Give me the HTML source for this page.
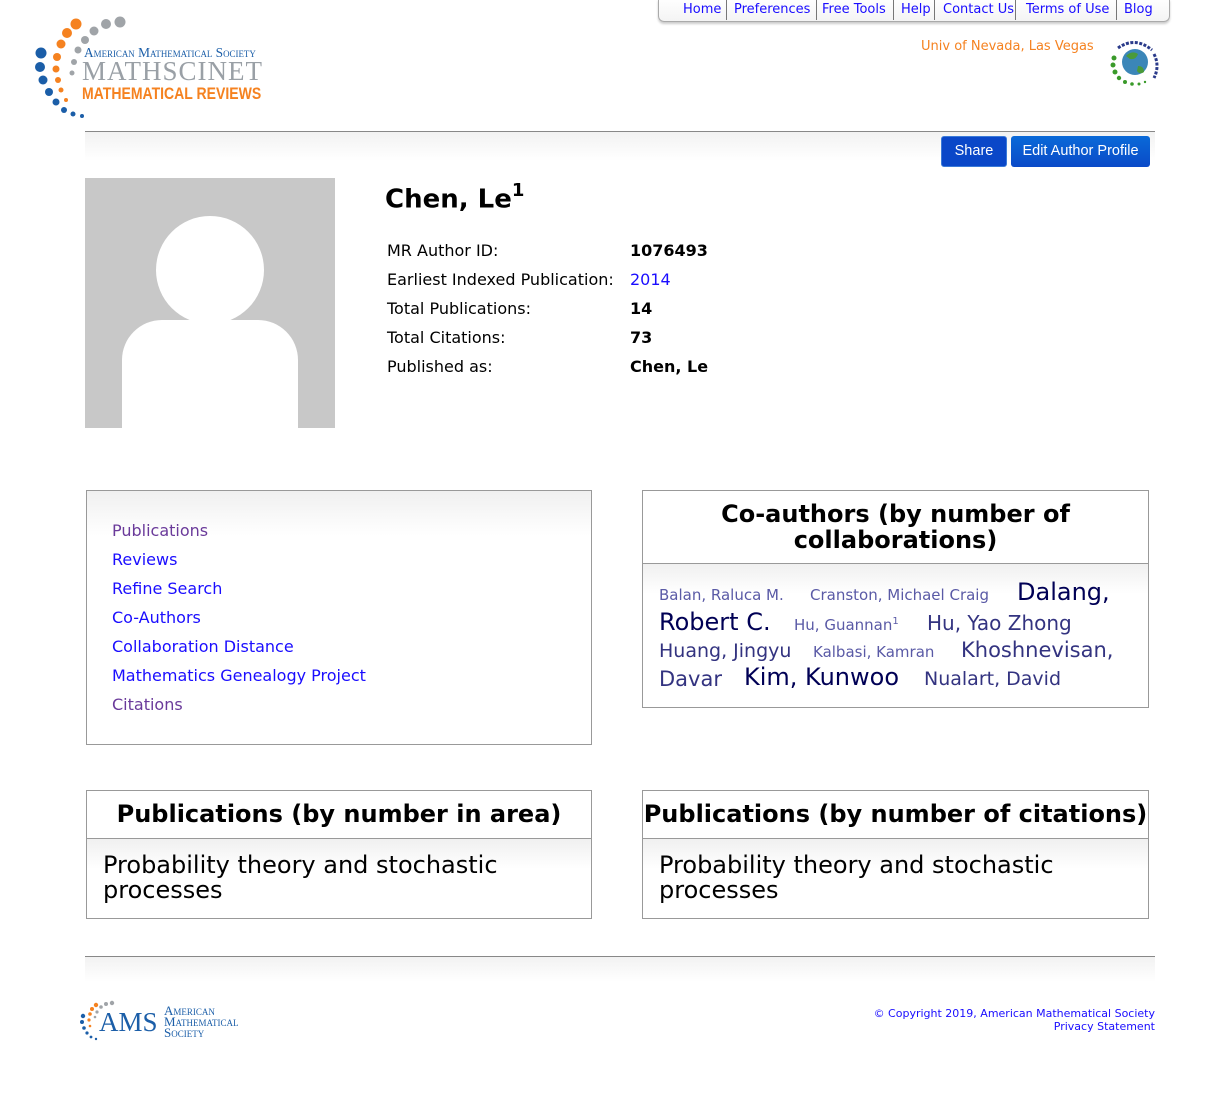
<!DOCTYPE html>
<html><head><meta charset="utf-8"><style>
*{margin:0;padding:0;box-sizing:border-box}
body{width:1224px;height:1094px;background:#fff;font-family:"DejaVu Sans","Liberation Sans",sans-serif;position:relative;overflow:hidden;color:#000}
.a{position:absolute;white-space:nowrap}
a{text-decoration:none;color:#1a0dff}
.nav{position:absolute;left:658px;top:-1px;width:512px;height:23px;border:1px solid #aaa;border-top:none;border-radius:0 0 6px 6px;box-shadow:0 2px 2px #ccc;background:linear-gradient(#fff,#f4f4f4);font-size:13px;}
.nav span{position:absolute;top:3px;color:#1a0dff}
.nav i{position:absolute;top:1px;height:20px;border-left:1px solid #777}
.box{position:absolute;border:1px solid #999;background:linear-gradient(#f0f0f0,#fff 45px)}
.hd{position:absolute;left:0;right:0;text-align:center;font-weight:bold;font-size:24px;line-height:26px}
.sep{position:absolute;left:0;right:0;border-top:1px solid #999}
.inner{position:absolute;left:0;right:0;background:linear-gradient(#f0f0f0,#fff 30px)}
.row{position:absolute;font-size:16px}
.lk{position:absolute;font-size:16px;left:25px}
.s{color:#5a5aa6;font-size:15px}
.m{color:#333380;font-size:20px}
.l{color:#000055;font-size:24px}
</style></head><body>

<svg class="a" style="left:32px;top:14px" width="100" height="104" viewBox="0 0 100 104">
<g fill="#f58220"><circle cx="44" cy="10" r="5.5"/><circle cx="35" cy="19" r="5"/><circle cx="29" cy="30" r="4.5"/><circle cx="25" cy="43" r="4"/><circle cx="24" cy="55" r="3.5"/><circle cx="26" cy="66" r="3"/><circle cx="29" cy="76" r="2.5"/><circle cx="34" cy="86" r="2"/></g>
<g fill="#a0a4a8"><circle cx="88" cy="8" r="5.5"/><circle cx="74" cy="10" r="5"/><circle cx="62" cy="17" r="4.5"/><circle cx="53" cy="26" r="4"/><circle cx="46" cy="36" r="3.5"/><circle cx="42" cy="48" r="3"/><circle cx="40" cy="59" r="2.5"/></g>
<g fill="#1b5ea8"><circle cx="9" cy="39" r="5.5"/><circle cx="8" cy="53" r="5"/><circle cx="11" cy="66" r="4.5"/><circle cx="17" cy="78" r="4"/><circle cx="24" cy="88" r="3.5"/><circle cx="32" cy="96" r="3"/><circle cx="41" cy="100" r="2.5"/><circle cx="50" cy="102" r="2"/></g>
</svg>
<div class="a" style="left:84px;top:45px;font-family:'Liberation Serif',serif;font-size:13.5px;color:#1b5ea8;font-variant:small-caps;transform:scaleX(0.99);transform-origin:left">American Mathematical Society</div>
<div class="a" style="left:82px;top:56px;font-family:'Liberation Serif',serif;font-size:27px;color:#9aa0a6;letter-spacing:1px">MATHSCINET</div>
<div class="a" style="left:82px;top:85px;font-family:'Liberation Sans',sans-serif;font-weight:bold;font-size:16.5px;color:#f58220;transform:scaleX(0.85);transform-origin:left">MATHEMATICAL REVIEWS</div>

<div class="nav">
<span style="left:24px">Home</span><i style="left:67px"></i>
<span style="left:75px">Preferences</span><i style="left:157px"></i>
<span style="left:163px">Free Tools</span><i style="left:234px"></i>
<span style="left:242px">Help</span><i style="left:275px"></i>
<span style="left:284px">Contact Us</span><i style="left:356px"></i>
<span style="left:367px">Terms of Use</span><i style="left:457px"></i>
<span style="left:465px">Blog</span>
</div>

<div class="a" style="left:921px;top:39px;font-size:13px;color:#f58220">Univ of Nevada, Las Vegas</div>
<svg class="a" style="left:1108px;top:36px" width="54" height="54" viewBox="0 0 54 54">
<circle cx="27" cy="26" r="13" fill="#3b86b8"/><path d="M18 20q6-6 12-2q-2 6-8 5z M30 30q6 0 6 6q-4 3-7-1z" fill="#4a9a3a"/>
<g fill="#3a9a2a"><circle cx="6" cy="22" r="2.5"/><circle cx="5" cy="29" r="2.5"/><circle cx="7" cy="36" r="2.5"/><circle cx="11" cy="42" r="2.2"/><circle cx="17" cy="46" r="2"/><circle cx="24" cy="48" r="1.8"/><circle cx="31" cy="48" r="1.5"/><circle cx="37" cy="46" r="1.2"/></g>
<path d="M10 12 Q27 0 44 14" stroke="#2a3a8a" stroke-width="3" stroke-dasharray="3 1.5" fill="none"/>
<path d="M46 18 Q52 30 46 42" stroke="#2a3a8a" stroke-width="3" stroke-dasharray="3 1.5" fill="none"/>
</svg>

<div class="a" style="left:85px;top:131px;width:1070px;height:30px;border-top:1px solid #888;background:linear-gradient(#f2f2f2,#fff)"></div>
<div class="a" style="left:941px;top:136px;width:66px;height:31px;background:#0a47c8;border:1px solid #3a7ad8;border-radius:3px;color:#fff;font-family:'Liberation Sans',sans-serif;font-size:14.5px;text-align:center;line-height:29px">Share</div>
<div class="a" style="left:1011px;top:136px;width:139px;height:31px;background:linear-gradient(#0a6ad8,#0a4ac8);border-radius:3px;color:#fff;font-family:'Liberation Sans',sans-serif;font-size:14.5px;text-align:center;line-height:31px">Edit Author Profile</div>

<div class="a" style="left:85px;top:178px;width:250px;height:250px;background:#c8c8c8;overflow:hidden">
<div style="position:absolute;left:71px;top:38px;width:108px;height:108px;border-radius:50%;background:#fff"></div>
<div style="position:absolute;left:37px;top:142px;width:176px;height:140px;border-radius:40px 40px 0 0;background:#fff"></div>
</div>

<div class="a" style="left:385px;top:182px;font-size:26px;font-weight:bold">Chen, Le<sup style="font-size:18px;position:relative;top:-2px">1</sup></div>
<div class="row a" style="left:387px;top:241px">MR Author ID:</div><div class="row a" style="left:630px;top:241px;font-weight:bold">1076493</div>
<div class="row a" style="left:387px;top:270px">Earliest Indexed Publication:</div><div class="row a" style="left:630px;top:270px;color:#1a0dff">2014</div>
<div class="row a" style="left:387px;top:299px">Total Publications:</div><div class="row a" style="left:630px;top:299px;font-weight:bold">14</div>
<div class="row a" style="left:387px;top:328px">Total Citations:</div><div class="row a" style="left:630px;top:328px;font-weight:bold">73</div>
<div class="row a" style="left:387px;top:357px">Published as:</div><div class="row a" style="left:630px;top:357px;font-weight:bold">Chen, Le</div>

<div class="box" style="left:86px;top:490px;width:506px;height:255px">
<div class="lk a" style="top:30px;color:#6a3a9a">Publications</div>
<div class="lk a" style="top:59px;color:#1a0dff">Reviews</div>
<div class="lk a" style="top:88px;color:#1a0dff">Refine Search</div>
<div class="lk a" style="top:117px;color:#1a0dff">Co-Authors</div>
<div class="lk a" style="top:146px;color:#1a0dff">Collaboration Distance</div>
<div class="lk a" style="top:175px;color:#1a0dff">Mathematics Genealogy Project</div>
<div class="lk a" style="top:204px;color:#6a3a9a">Citations</div>
</div>

<div class="box" style="left:642px;top:490px;width:507px;height:218px;background:#fff">
<div class="hd" style="top:10px">Co-authors (by number of<br>collaborations)</div>
<div class="sep" style="top:72px"></div>
<div class="inner" style="top:73px;height:40px"></div>
<div class="a s" style="left:16px;top:95px">Balan, Raluca M.</div>
<div class="a s" style="left:167px;top:95px">Cranston, Michael Craig</div>
<div class="a l" style="left:374px;top:87px">Dalang,</div>
<div class="a l" style="left:16px;top:117px">Robert C.</div>
<div class="a s" style="left:151px;top:125px">Hu, Guannan<sup style="font-size:10px">1</sup></div>
<div class="a m" style="left:284px;top:120px">Hu, Yao Zhong</div>
<div class="a m" style="left:16px;top:149px;font-size:19px">Huang, Jingyu</div>
<div class="a s" style="left:170px;top:152px">Kalbasi, Kamran</div>
<div class="a m" style="left:318px;top:147px;font-size:21px">Khoshnevisan,</div>
<div class="a m" style="left:16px;top:176px;font-size:21px">Davar</div>
<div class="a l" style="left:101px;top:172px">Kim, Kunwoo</div>
<div class="a m" style="left:281px;top:177px;font-size:19px">Nualart, David</div>
</div>

<div class="box" style="left:86px;top:790px;width:506px;height:129px;background:#fff">
<div class="hd" style="top:10px">Publications (by number in area)</div>
<div class="sep" style="top:47px"></div>
<div class="inner" style="top:48px;height:30px"></div>
<div class="a" style="left:16px;top:62px;font-size:24px;line-height:25px">Probability theory and stochastic<br>processes</div>
</div>

<div class="box" style="left:642px;top:790px;width:507px;height:129px;background:#fff">
<div class="hd" style="top:10px">Publications (by number of citations)</div>
<div class="sep" style="top:47px"></div>
<div class="inner" style="top:48px;height:30px"></div>
<div class="a" style="left:16px;top:62px;font-size:24px;line-height:25px">Probability theory and stochastic<br>processes</div>
</div>

<div class="a" style="left:85px;top:956px;width:1070px;height:26px;border-top:1px solid #888;background:linear-gradient(#f2f2f2,#fff)"></div>

<svg class="a" style="left:79px;top:1000px" width="40" height="42" viewBox="0 0 40 42">
<g fill="#f58220"><circle cx="17" cy="5" r="2.2"/><circle cx="13" cy="9" r="2"/><circle cx="11" cy="14" r="1.8"/><circle cx="10" cy="20" r="1.6"/><circle cx="11" cy="26" r="1.3"/></g>
<g fill="#a0a4a8"><circle cx="33" cy="3" r="2.2"/><circle cx="27" cy="4" r="2"/><circle cx="22" cy="7" r="1.8"/><circle cx="18" cy="12" r="1.6"/><circle cx="16" cy="17" r="1.3"/></g>
<g fill="#1b5ea8"><circle cx="4" cy="16" r="2.2"/><circle cx="3" cy="22" r="2"/><circle cx="5" cy="28" r="1.8"/><circle cx="8" cy="33" r="1.6"/><circle cx="12" cy="37" r="1.4"/><circle cx="17" cy="39" r="1.2"/></g>
</svg>
<div class="a" style="left:99px;top:1007px;font-family:'Liberation Serif',serif;font-size:27px;color:#1b5ea8">AMS</div>
<div class="a" style="left:164px;top:1005px;font-family:'Liberation Serif',serif;font-size:13px;line-height:11px;color:#1b5ea8;font-variant:small-caps">American<br>Mathematical<br>Society</div>

<div class="a" style="right:69px;top:1007px;font-size:11px;line-height:13px;color:#1a0dff;text-align:right">© Copyright 2019, American Mathematical Society<br>Privacy Statement</div>
</body></html>
